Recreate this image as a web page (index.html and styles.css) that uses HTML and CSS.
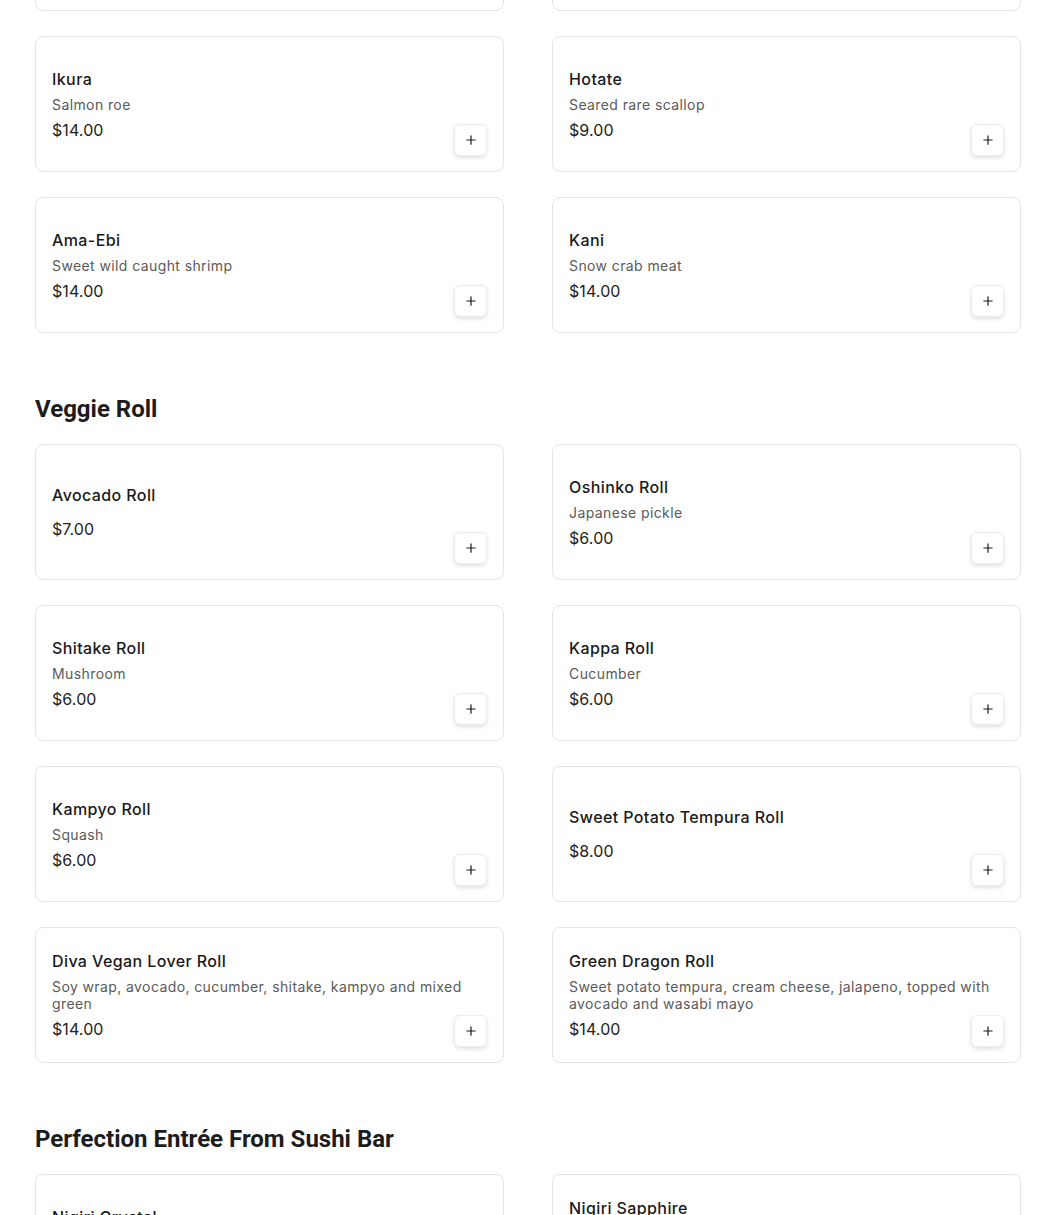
FILE: index.html
```html
<!DOCTYPE html>
<html lang="en">
<head>
<meta charset="utf-8">
<title>Menu</title>
<link rel="stylesheet" href="styles.css">
</head>
<body>
<main class="menu">
  <section class="section section-first">
    <div class="grid">
      <div class="card"><div class="info"><div class="name">Maguro</div><div class="desc">Tuna</div><div class="price">$9.00</div></div><button class="add" aria-label="Add"><svg viewBox="0 0 16 16" width="12" height="12"><path d="M8 2.5v11M2.5 8h11" stroke="#1a1a1a" stroke-width="1.6" stroke-linecap="round"/></svg></button></div>
      <div class="card"><div class="info"><div class="name">Sake</div><div class="desc">Salmon</div><div class="price">$9.00</div></div><button class="add" aria-label="Add"><svg viewBox="0 0 16 16" width="12" height="12"><path d="M8 2.5v11M2.5 8h11" stroke="#1a1a1a" stroke-width="1.6" stroke-linecap="round"/></svg></button></div>
      <div class="card"><div class="info"><div class="name">Ikura</div><div class="desc">Salmon roe</div><div class="price">$14.00</div></div><button class="add" aria-label="Add"><svg viewBox="0 0 16 16" width="12" height="12"><path d="M8 2.5v11M2.5 8h11" stroke="#1a1a1a" stroke-width="1.6" stroke-linecap="round"/></svg></button></div>
      <div class="card"><div class="info"><div class="name">Hotate</div><div class="desc">Seared rare scallop</div><div class="price">$9.00</div></div><button class="add" aria-label="Add"><svg viewBox="0 0 16 16" width="12" height="12"><path d="M8 2.5v11M2.5 8h11" stroke="#1a1a1a" stroke-width="1.6" stroke-linecap="round"/></svg></button></div>
      <div class="card"><div class="info"><div class="name">Ama-Ebi</div><div class="desc">Sweet wild caught shrimp</div><div class="price">$14.00</div></div><button class="add" aria-label="Add"><svg viewBox="0 0 16 16" width="12" height="12"><path d="M8 2.5v11M2.5 8h11" stroke="#1a1a1a" stroke-width="1.6" stroke-linecap="round"/></svg></button></div>
      <div class="card"><div class="info"><div class="name">Kani</div><div class="desc">Snow crab meat</div><div class="price">$14.00</div></div><button class="add" aria-label="Add"><svg viewBox="0 0 16 16" width="12" height="12"><path d="M8 2.5v11M2.5 8h11" stroke="#1a1a1a" stroke-width="1.6" stroke-linecap="round"/></svg></button></div>
    </div>
  </section>

  <section class="section">
    <h2 class="section-title">Veggie Roll</h2>
    <div class="grid">
      <div class="card"><div class="info"><div class="name">Avocado Roll</div><div class="price price-only">$7.00</div></div><button class="add" aria-label="Add"><svg viewBox="0 0 16 16" width="12" height="12"><path d="M8 2.5v11M2.5 8h11" stroke="#1a1a1a" stroke-width="1.6" stroke-linecap="round"/></svg></button></div>
      <div class="card"><div class="info"><div class="name">Oshinko Roll</div><div class="desc">Japanese pickle</div><div class="price">$6.00</div></div><button class="add" aria-label="Add"><svg viewBox="0 0 16 16" width="12" height="12"><path d="M8 2.5v11M2.5 8h11" stroke="#1a1a1a" stroke-width="1.6" stroke-linecap="round"/></svg></button></div>
      <div class="card"><div class="info"><div class="name">Shitake Roll</div><div class="desc">Mushroom</div><div class="price">$6.00</div></div><button class="add" aria-label="Add"><svg viewBox="0 0 16 16" width="12" height="12"><path d="M8 2.5v11M2.5 8h11" stroke="#1a1a1a" stroke-width="1.6" stroke-linecap="round"/></svg></button></div>
      <div class="card"><div class="info"><div class="name">Kappa Roll</div><div class="desc">Cucumber</div><div class="price">$6.00</div></div><button class="add" aria-label="Add"><svg viewBox="0 0 16 16" width="12" height="12"><path d="M8 2.5v11M2.5 8h11" stroke="#1a1a1a" stroke-width="1.6" stroke-linecap="round"/></svg></button></div>
      <div class="card"><div class="info"><div class="name">Kampyo Roll</div><div class="desc">Squash</div><div class="price">$6.00</div></div><button class="add" aria-label="Add"><svg viewBox="0 0 16 16" width="12" height="12"><path d="M8 2.5v11M2.5 8h11" stroke="#1a1a1a" stroke-width="1.6" stroke-linecap="round"/></svg></button></div>
      <div class="card"><div class="info"><div class="name">Sweet Potato Tempura Roll</div><div class="price price-only">$8.00</div></div><button class="add" aria-label="Add"><svg viewBox="0 0 16 16" width="12" height="12"><path d="M8 2.5v11M2.5 8h11" stroke="#1a1a1a" stroke-width="1.6" stroke-linecap="round"/></svg></button></div>
      <div class="card"><div class="info"><div class="name">Diva Vegan Lover Roll</div><div class="desc">Soy wrap, avocado, cucumber, shitake, kampyo and mixed green</div><div class="price">$14.00</div></div><button class="add" aria-label="Add"><svg viewBox="0 0 16 16" width="12" height="12"><path d="M8 2.5v11M2.5 8h11" stroke="#1a1a1a" stroke-width="1.6" stroke-linecap="round"/></svg></button></div>
      <div class="card"><div class="info"><div class="name">Green Dragon Roll</div><div class="desc">Sweet potato tempura, cream cheese, jalapeno, topped with avocado and wasabi mayo</div><div class="price">$14.00</div></div><button class="add" aria-label="Add"><svg viewBox="0 0 16 16" width="12" height="12"><path d="M8 2.5v11M2.5 8h11" stroke="#1a1a1a" stroke-width="1.6" stroke-linecap="round"/></svg></button></div>
    </div>
  </section>

  <section class="section">
    <h2 class="section-title">Perfection Entrée From Sushi Bar</h2>
    <div class="grid">
      <div class="card"><div class="info"><div class="name">Nigiri Crystal</div><div class="desc">Chef's choice of 5 pieces nigiri</div><div class="price">$30.00</div></div><button class="add" aria-label="Add"><svg viewBox="0 0 16 16" width="12" height="12"><path d="M8 2.5v11M2.5 8h11" stroke="#1a1a1a" stroke-width="1.6" stroke-linecap="round"/></svg></button></div>
      <div class="card"><div class="info"><div class="name">Nigiri Sapphire</div><div class="desc">Chef's choice of 7 pieces nigiri, with a roll and more of the chef's daily selection</div><div class="price">$45.00</div></div><button class="add" aria-label="Add"><svg viewBox="0 0 16 16" width="12" height="12"><path d="M8 2.5v11M2.5 8h11" stroke="#1a1a1a" stroke-width="1.6" stroke-linecap="round"/></svg></button></div>
    </div>
  </section>
</main>
</body>
</html>
```
FILE: styles.css
```css
* { box-sizing: border-box; }
html, body { margin: 0; padding: 0; background: #fff; }
body { font-family: Inter, "Noto Sans", sans-serif; color: #1a1a1a; overflow: hidden; height: 1215px; }
.menu { padding: 0 29px 0 35px; margin-top: -125px; }
.section { margin-bottom: 62px; }
.section-title {
  font-family: Roboto, "Liberation Sans", sans-serif;
  font-weight: 700;
  font-size: 24px;
  line-height: 28px;
  color: #1c1c1c;
  margin: 0 0 21px;
}
.grid {
  display: grid;
  grid-template-columns: 469px 469px;
  column-gap: 48px;
  row-gap: 25px;
}
.card {
  position: relative;
  height: 136px;
  border: 1px solid #e4e4e4;
  border-radius: 8px;
  background: #fff;
  padding: 16px;
  display: flex;
  align-items: center;
}
.info { width: 100%; }
.name { font-size: 16px; font-weight: 500; line-height: 20px; color: #1a1a1a; margin-bottom: 7px; letter-spacing: 0.4px; }
.desc { font-size: 14px; line-height: 17px; color: #5a5a5a; margin-bottom: 7px; letter-spacing: 0.4px; }
.price { font-size: 16px; line-height: 20px; color: #222; letter-spacing: 0.1px; }
.price-only { margin-top: 14px; }
.add {
  position: absolute;
  right: 16px;
  bottom: 15px;
  width: 33px;
  height: 32px;
  padding: 0;
  border: 1px solid #ececec;
  border-radius: 6px;
  background: #fff;
  box-shadow: 0 2px 4px rgba(0,0,0,0.12);
  display: flex;
  align-items: center;
  justify-content: center;
  cursor: pointer;
}
.add svg { display: block; }
```
